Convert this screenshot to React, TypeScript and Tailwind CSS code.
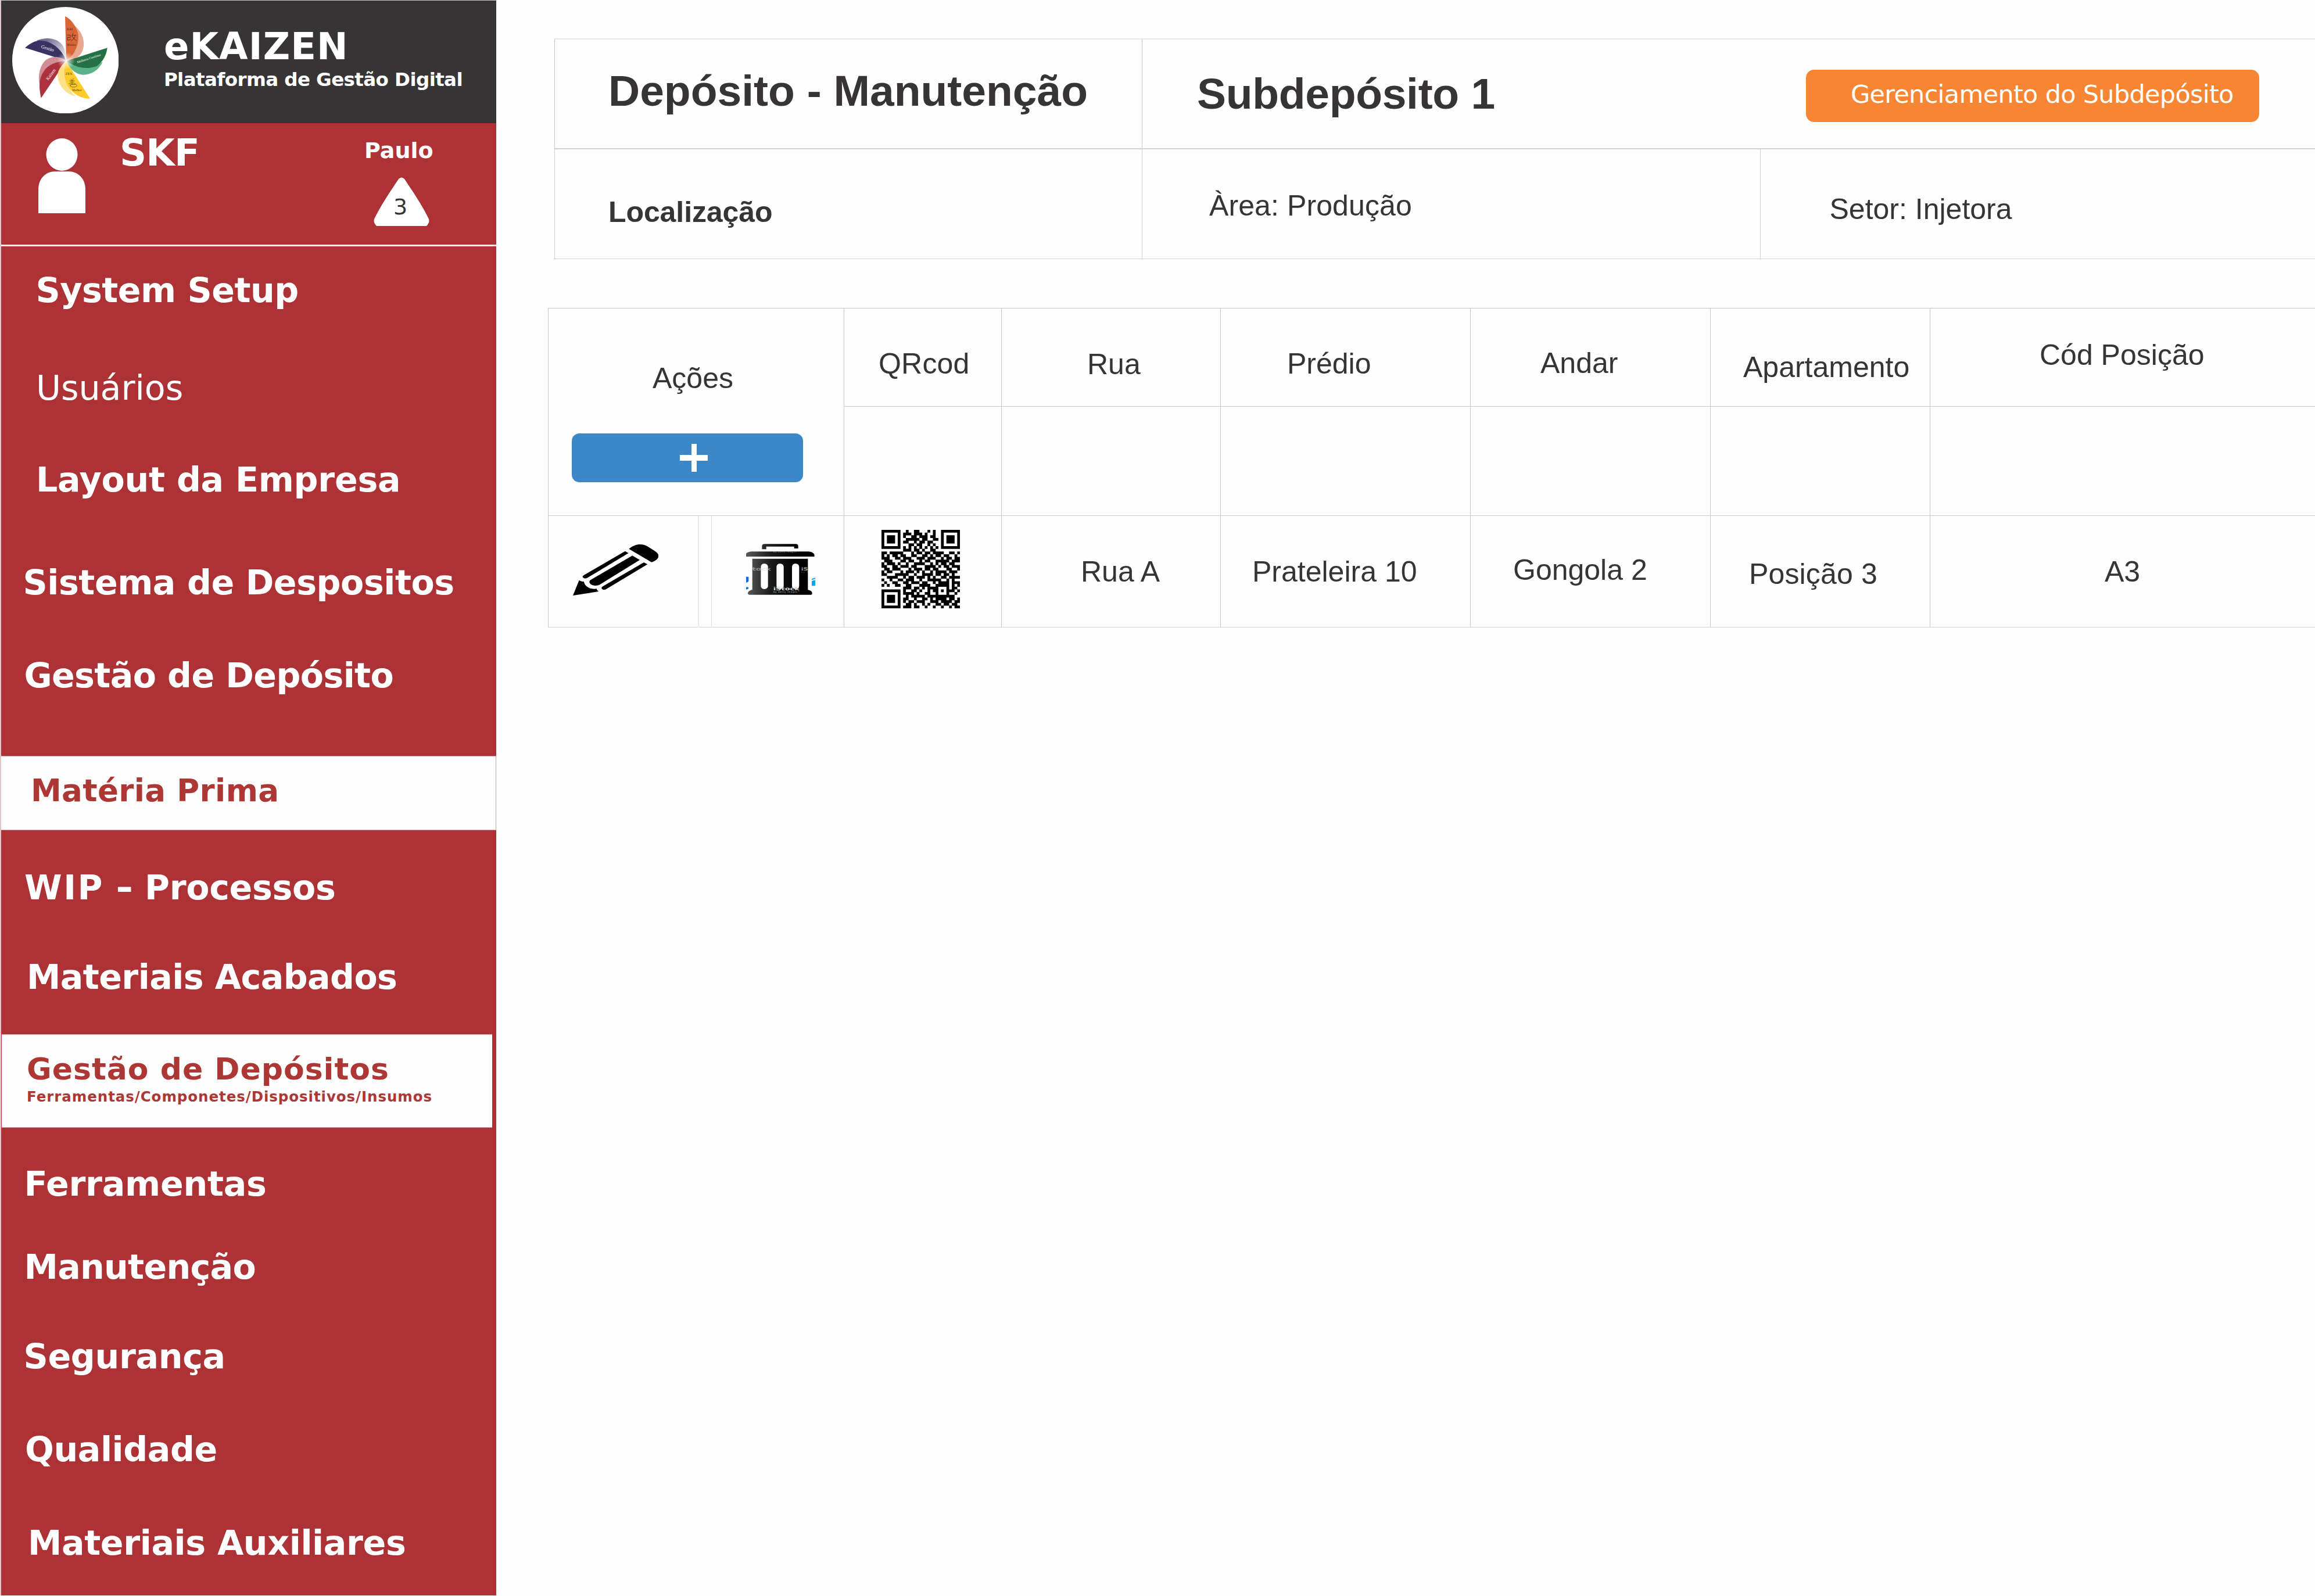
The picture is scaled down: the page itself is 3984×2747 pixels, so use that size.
import React from "react";

const VERDANA = "font-['Verdana','DejaVu_Sans',sans-serif]";

type NavItem = { label: string; content?: React.ReactNode; row: string };

const navTop: NavItem[] = [
  { label: "System Setup", row: "mt-[26px] pl-[59.5px] font-bold tracking-[-0.5px]" },
  { label: "Usuários", row: "mt-[68px] pl-[60px]" },
  { label: "Layout da Empresa", row: "mt-[58px] pl-[60px] font-bold tracking-[-0.25px]" },
  { label: "Sistema de Despositos", row: "mt-[77px] pl-[37.5px] font-bold tracking-[-0.44px]" },
  { label: "Gestão de Depósito", row: "mt-[60px] pl-[39.5px] font-bold tracking-[-0.62px]" },
];

const navMiddle: NavItem[] = [
  {
    label: "WIP - Processos",
    content: (
      <>
        <span className="tracking-[2.5px]">WIP</span> <span className="mr-[5px] inline-block origin-left scale-x-125">-</span>{" "}
        <span className="tracking-[-0.33px]">Processos</span>
      </>
    ),
    row: "mt-[49px] pl-[40px] font-bold",
  },
  { label: "Materiais Acabados", row: "mt-[54px] pl-[44px] font-bold tracking-[-0.57px]" },
];

const navBottom: NavItem[] = [
  { label: "Ferramentas", row: "mt-[47px] pl-[39.5px] font-bold tracking-[-0.23px]" },
  { label: "Manutenção", row: "mt-[43px] pl-[39.5px] font-bold tracking-[-0.67px]" },
  { label: "Segurança", row: "mt-[54px] pl-[38.5px] font-bold tracking-[-0.3px]" },
  { label: "Qualidade", row: "mt-[60px] pl-[41px] font-bold tracking-[-0.39px]" },
  { label: "Materiais Auxiliares", row: "mt-[61px] pl-[46px] font-bold tracking-[-0.36px]" },
];

function NavRows({ items }: { items: NavItem[] }) {
  return (
    <>
      {items.map((item) => (
        <a
          key={item.label}
          className={`block h-[100px] shrink-0 whitespace-nowrap text-[58.6px] leading-[100px] text-white ${item.row}`}
        >
          {item.content ?? item.label}
        </a>
      ))}
    </>
  );
}

function Logo() {
  return (
    <svg viewBox="63 37 550 550" className="h-[183.4px] w-[183.4px] shrink-0">
      <defs>
        <radialGradient id="hub" gradientUnits="userSpaceOnUse" cx="341" cy="314" r="46">
          <stop offset="0" stopColor="#fff" stopOpacity="0.95" />
          <stop offset="0.4" stopColor="#fff" stopOpacity="0.5" />
          <stop offset="1" stopColor="#fff" stopOpacity="0" />
        </radialGradient>
        <linearGradient id="violet" x1="0" x2="1" y1="0" y2="0.6">
          <stop offset="0.3" stopColor="#777296" />
          <stop offset="1" stopColor="#d9d8e4" />
        </linearGradient>
      </defs>
      <circle cx="338" cy="312" r="275" fill="#fff" />
      <path d="M385 134C430 170 442 225 425 265C412 296 380 312 342 315C390 260 410 200 385 134Z" fill="#e9a78f" />
      <path d="M336 86C360 92 398 140 404 182C408 240 380 290 342 314Z" fill="#d96635" />
      <path d="M188 211C240 190 290 198 318 228C335 250 341 280 341 313C310 260 260 215 188 211Z" fill="url(#violet)" />
      <path d="M129 248C155 224 182 211 205 210C262 208 320 255 341 314Z" fill="#3a3263" />
      <path d="M530 318C510 365 470 388 425 387C385 383 355 350 342 317C400 360 470 360 530 318Z" fill="#5bb38a" />
      <path d="M554 248C550 285 530 322 500 342C440 365 380 345 342 316Z" fill="#267045" />
      <path d="M341 316C290 325 235 350 204 436C195 390 205 340 235 312C265 288 315 290 341 316Z" fill="#d08d93" />
      <path d="M341 316C290 318 245 335 222 375C195 420 205 470 212 507Z" fill="#ad323e" />
      <path d="M341 316C320 390 340 455 392 498C340 488 305 445 298 400C295 370 310 345 341 316Z" fill="#fde187" />
      <path d="M341 316C325 365 330 415 355 455C385 490 425 512 465 510Z" fill="#fecb2b" />
      <circle cx="341" cy="314" r="46" fill="url(#hub)" />
      <g className="font-['Liberation_Serif',serif]">
        <text x="346" y="156" fontSize="17" fill="#4a2a1c" textLength="29">KAI</text>
        <text x="345" y="238" fontSize="16" fill="#4a2a1c" textLength="47">Mudar</text>
        <text x="338" y="389" fontSize="17" fill="#4a3b1c" textLength="35">ZEN</text>
        <text x="373" y="473" fontSize="16" fill="#4a3b1c" textLength="49">Melhor</text>
        <text x="0" y="0" fontSize="24" fill="#fff" transform="translate(211 248) rotate(17)" textLength="68">Gestão</text>
        <text x="0" y="0" fontSize="24" fill="#fff" transform="translate(249 417) rotate(-54)" textLength="67">Kaizen</text>
        <text x="0" y="0" fontSize="17" fill="#fff" transform="translate(399 328) rotate(-18)" textLength="128">Melhoria Contínua</text>
      </g>
      <g fill="none" stroke="#4a2a1c" strokeWidth="2.6" strokeLinecap="round">
        <path d="M346 182H363V194H349V208Q356 211 366 203M378 172L370 188M374 183H392M388 184Q384 203 367 212M373 188Q382 205 395 211" />
        <path stroke="#6b5420" d="M365 409L370 415M379 406L374 415M360 418H384M362 425H382M356 433H390M372 415V434M362 441Q362 437 380 437Q398 437 397 443Q396 451 379 451Q363 451 362 441Z" />
      </g>
    </svg>
  );
}

function UserIcon() {
  return (
    <svg viewBox="0 0 82 129" className="ml-[64px] mt-[26px] h-[129px] w-[82px] shrink-0" fill="#fff">
      <ellipse cx="40.5" cy="28" rx="27" ry="28" />
      <path d="M0 129V88C0 70 12 57 30 57H51C69 57 81 70 81 88V129Z" />
    </svg>
  );
}

function AlertBadge() {
  return (
    <div className="relative ml-[16px] mt-[29px] h-[84px] w-[96px]">
      <svg viewBox="0 0 96 84" className="h-[84px] w-[96px]" fill="#fff">
        <path d="M43 3Q48 -2 53 3C67 24 82 46 94 70Q98 77 91 84H5Q-2 77 2 70C14 46 29 24 43 3Z" />
      </svg>
      <span className="absolute left-[34px] top-[21px] text-[38px] leading-[60px] text-[#373435]">3</span>
    </div>
  );
}

function PencilIcon() {
  return (
    <svg viewBox="77 111 442 264" className="ml-[42px] mt-[49px] h-[88px] w-[147.3px]" fill="#000">
      <path d="M366 134C385 119 405 111 423 111C440 111 453 116 464 122L498 144C515 155 519 163 519 171C517 186 503 196 483 203Z" />
      <path d="M346 146L364 156L153 283C144 288 136 288 129 282C125 278 127 274 133 270Z" />
      <path d="M384 169L422 191L218 317C205 325 184 326 173 319C160 312 158 301 169 294Z" />
      <path d="M443 204L462 214L250 341C243 346 233 346 227 341C222 337 225 332 231 328Z" />
      <path d="M109 296C116 300 125 303 134 303C135 322 157 340 185 341C190 341 195 341 199 340C200 345 204 350 210 354L77 375Z" />
    </svg>
  );
}

function TrashIcon() {
  return (
    <svg viewBox="972 107 357 265" className="ml-[59px] mt-[48px] h-[88.3px] w-[119px]">
      <defs>
        <linearGradient id="bin" gradientUnits="userSpaceOnUse" x1="985" x2="1230" y1="0" y2="0">
          <stop offset="0" stopColor="#555" />
          <stop offset="0.45" stopColor="#1c1c1c" />
          <stop offset="1" stopColor="#000" />
        </linearGradient>
      </defs>
      <path fill="url(#bin)" d="M1054 135V120Q1054 108 1068 108H1228Q1241 108 1241 120V131H1220V121H1076V135Z" />
      <path fill="url(#bin)" d="M972 173V158Q982 147 1002 147H1294Q1320 149 1325 164V173Z" />
      <path
        fill="url(#bin)"
        fillRule="evenodd"
        d="M1004 184H1291V344C1304 348 1313 352 1313 362Q1313 370 1306 370H990Q981 370 981 362C981 353 992 347 1004 344ZM1048 225V326Q1050 340 1066 341Q1083 340 1085 326V225Q1083 210 1066 209Q1050 210 1048 225ZM1129 225V326Q1131 340 1147 341Q1164 340 1166 326V225Q1164 210 1147 209Q1131 210 1129 225ZM1209 225V326Q1211 340 1227 341Q1244 340 1246 326V225Q1244 210 1227 209Q1211 210 1209 225Z"
      />
      <path fill="#0a6fd8" d="M972 277H985V300Q982 307 972 307ZM972 331Q984 328 985 335Q984 341 972 343Z" />
      <path fill="#07a5ec" d="M1311 288L1329 282V288L1311 294ZM1311 299L1329 294V324H1311Z" />
      <g className="font-['DejaVu_Sans',sans-serif]" fill="#d5d5d5">
        <text x="1112" y="347" fontSize="24" fontWeight="700" textLength="136" lengthAdjust="spacingAndGlyphs">iStock</text>
        <text x="1113" y="359" fontSize="11" textLength="136">by Getty Images™</text>
        <text x="1113" y="153" fontSize="10" textLength="130" opacity="0.7">by Getty Images™</text>
        <text x="1003" y="245" fontSize="24" fontWeight="700" textLength="98" lengthAdjust="spacingAndGlyphs" opacity="0.55">tock</text>
        <text x="1256" y="245" fontSize="24" fontWeight="700" textLength="36" lengthAdjust="spacingAndGlyphs" opacity="0.7">iS</text>
        <text x="1257" y="257" fontSize="10" textLength="36" opacity="0.5">by G</text>
      </g>
    </svg>
  );
}

const qrRows = [
  "11111110010011000101001111111",
  "10000010111011101001001000001",
  "10111010100110111011001011101",
  "10111010011111011001101011101",
  "10111010110010110110001011101",
  "10000010001101100101001000001",
  "11111110101010101010101111111",
  "00000000111011010011000000000",
  "11011111000101101101111001101",
  "10101101100110011010110110010",
  "11100110111001110111001011011",
  "01110001101100101100111110111",
  "10111010010011110010101101100",
  "11001101110110001111010110111",
  "01101110001011101101100011001",
  "10110001011101010010111101110",
  "11000111110010011110110110100",
  "00111100101101110101001101111",
  "10010011011100100111110010100",
  "01001100110111011001011110111",
  "10100110011000111100111110101",
  "00000000111011010111100010110",
  "11111110100110100101101011101",
  "10000010111101001100100010010",
  "10111010010111110111111111100",
  "10111010110010011010111101101",
  "10111010101101110011101111011",
  "10000010011010010100110110110",
  "11111110111011001001001001011",
];

function QrCode() {
  const d = qrRows
    .flatMap((row, y) => row.split("").map((bit, x) => (bit === "1" ? `M${x} ${y}h1.03v1.03h-1.03z` : "")))
    .join("");
  return (
    <svg viewBox="0 0 29 29" className="ml-[64px] mt-[24px] h-[135px] w-[135px]">
      <path d={d} fill="#000" />
    </svg>
  );
}

const headers = [
  { label: "QRcod", cell: "pl-[59px] pt-[65px] tracking-[0.2px]" },
  { label: "Rua", cell: "pl-[147px] pt-[66px]" },
  { label: "Prédio", cell: "pl-[114px] pt-[65px]" },
  { label: "Andar", cell: "pl-[120px] pt-[64px]" },
  { label: "Apartamento", cell: "pl-[56px] pt-[71px]" },
  { label: "Cód Posição", cell: "pl-[188px] pt-[50px]" },
];

const values = [
  { label: "Rua A", cell: "pl-[136px] pt-[66px]" },
  { label: "Prateleira 10", cell: "pl-[54px] pt-[66px]" },
  { label: "Gongola 2", cell: "pl-[73px] pt-[63px]" },
  { label: "Posição 3", cell: "pl-[66px] pt-[70px] tracking-[0.15px]" },
  { label: "A3", cell: "pl-[300px] pt-[66px]" },
];

const cellBase = "whitespace-nowrap border-l border-t border-[#c8c9ca] text-[50px] leading-[60px]";

export default function App() {
  return (
    <div className="flex h-[2747px] w-[3984px] overflow-hidden bg-[#fefefe] text-[#373435]">
      <aside className={`flex h-[2746px] w-[854px] shrink-0 flex-col border-l-2 border-[#dcc8c8] bg-[#ad3235] ${VERDANA}`}>
        <header className="flex h-[212px] shrink-0 border-t border-[#c4c6c8] bg-[#373435] pl-[19px] pt-[11px] text-white">
          <Logo />
          <div className="ml-[77.5px] whitespace-nowrap font-bold">
            <div className="mt-[28px] text-[64px] leading-[80px] tracking-[1.1px]">eKAIZEN</div>
            <div className="mt-[-13px] text-[32.5px] leading-[60px] tracking-[-0.6px]">Plataforma de Gestão Digital</div>
          </div>
        </header>
        <section className="flex h-[212px] shrink-0 border-b-3 border-[#f7eaea] text-white">
          <UserIcon />
          <div className="ml-[58px] mt-[11px] w-[421px] text-[64px] font-bold leading-[80px] tracking-[-0.8px]">SKF</div>
          <div>
            <div className="mt-[17px] text-[38px] font-bold leading-[60px]">Paulo</div>
            <div className="mt-[-13px]">
              <AlertBadge />
            </div>
          </div>
        </section>
        <nav className="flex flex-col">
          <NavRows items={navTop} />
          <a className="mt-[88px] block h-[128px] border-y border-r border-[#d9a3a5] bg-[#fefefe] pl-[51px] text-[53px] font-bold leading-[118px] tracking-[0.38px] text-[#ad3735]">
            Matéria Prima
          </a>
          <NavRows items={navMiddle} />
          <a className="ml-[1px] mt-[48px] block h-[161px] w-[844px] whitespace-nowrap border-y border-[#d9a3a5] bg-[#fefefe] pl-[43px] font-bold text-[#ad3735]">
            <div className="mt-[19px] text-[52px] leading-[80px] tracking-[1px]">Gestão de Depósitos</div>
            <div className="mt-[-7px] text-[24.5px] leading-[30px] tracking-[0.94px]">
              Ferramentas/Componetes/Dispositivos/Insumos
            </div>
          </a>
          <NavRows items={navBottom} />
        </nav>
      </aside>

      <main className="flex flex-1 flex-col pt-[66px] font-['Liberation_Sans',Arial,sans-serif]">
        <section className="ml-[100px] grid h-[380px] grid-cols-[1011px_1064px_955px] grid-rows-[189px_191px] border-r border-[#dedede]">
          <div className="border-l border-t-2 border-l-[#c8c9ca] border-t-[#e6e6e6] pl-[92px] pt-[38px] text-[75px] font-bold leading-[100px]">
            Depósito - Manutenção
          </div>
          <div className="col-span-2 flex items-start border-l border-t-2 border-l-[#c8c9ca] border-t-[#e6e6e6] pl-[94px]">
            <h1 className="mt-[43px] text-[75px] font-bold leading-[100px] tracking-[-0.3px]">Subdepósito 1</h1>
            <button
              className={`ml-auto mr-[96px] mt-[52px] block h-[90px] w-[780px] whitespace-nowrap rounded-[14px] bg-[#f68634] pb-[5px] pl-[77px] text-left text-[43px] leading-[83px] tracking-[-0.71px] text-white ${VERDANA}`}
            >
              Gerenciamento do Subdepósito
            </button>
          </div>
          <div className="border-b border-l border-t-2 border-[#d2d3d4] pl-[92px] pt-[78px] text-[50px] font-bold leading-[60px] tracking-[-0.09px]">
            Localização
          </div>
          <div className="border-b border-l border-t-2 border-[#d2d3d4] pl-[115px] pt-[67px] text-[50px] leading-[60px] tracking-[0.1px]">
            Àrea: Produção
          </div>
          <div className="border-b border-l border-t-2 border-[#d2d3d4] pl-[118.5px] pt-[73px] text-[50px] leading-[60px]">
            Setor: Injetora
          </div>
        </section>

        <section className="ml-[89px] mt-[84px] grid h-[550px] grid-cols-[509px_271px_377px_430px_413px_378px_663px] grid-rows-[169px_188px_193px] border-b border-r border-[#d0d1d2]">
          <div className={`row-span-2 ${cellBase}`}>
            <div className="ml-[179px] mt-[90px]">Ações</div>
            <button className="ml-[40px] mt-[65px] block h-[84px] w-[398px] rounded-[13px] bg-[#3c87c7] pl-[185.5px]">
              <svg viewBox="0 0 48 48" className="h-[48px] w-[48px]" fill="#fff">
                <path d="M20 0h9v19h19v10H29v19h-9V29H0V19h20z" />
              </svg>
            </button>
          </div>
          {headers.map((h) => (
            <div key={h.label} className={`${cellBase} ${h.cell}`}>
              {h.label}
            </div>
          ))}
          {headers.map((h) => (
            <div key={h.label} className={cellBase} />
          ))}
          <div className="grid grid-cols-[259px_22px_1fr] border-l border-t border-[#c8c9ca]">
            <div className="border-r-2 border-[#ebebeb]">
              <PencilIcon />
            </div>
            <div className="border-r border-[#dcdcdc]" />
            <div>
              <TrashIcon />
            </div>
          </div>
          <div className={cellBase}>
            <QrCode />
          </div>
          {values.map((v) => (
            <div key={v.label} className={`${cellBase} ${v.cell}`}>
              {v.label}
            </div>
          ))}
        </section>
      </main>
    </div>
  );
}
